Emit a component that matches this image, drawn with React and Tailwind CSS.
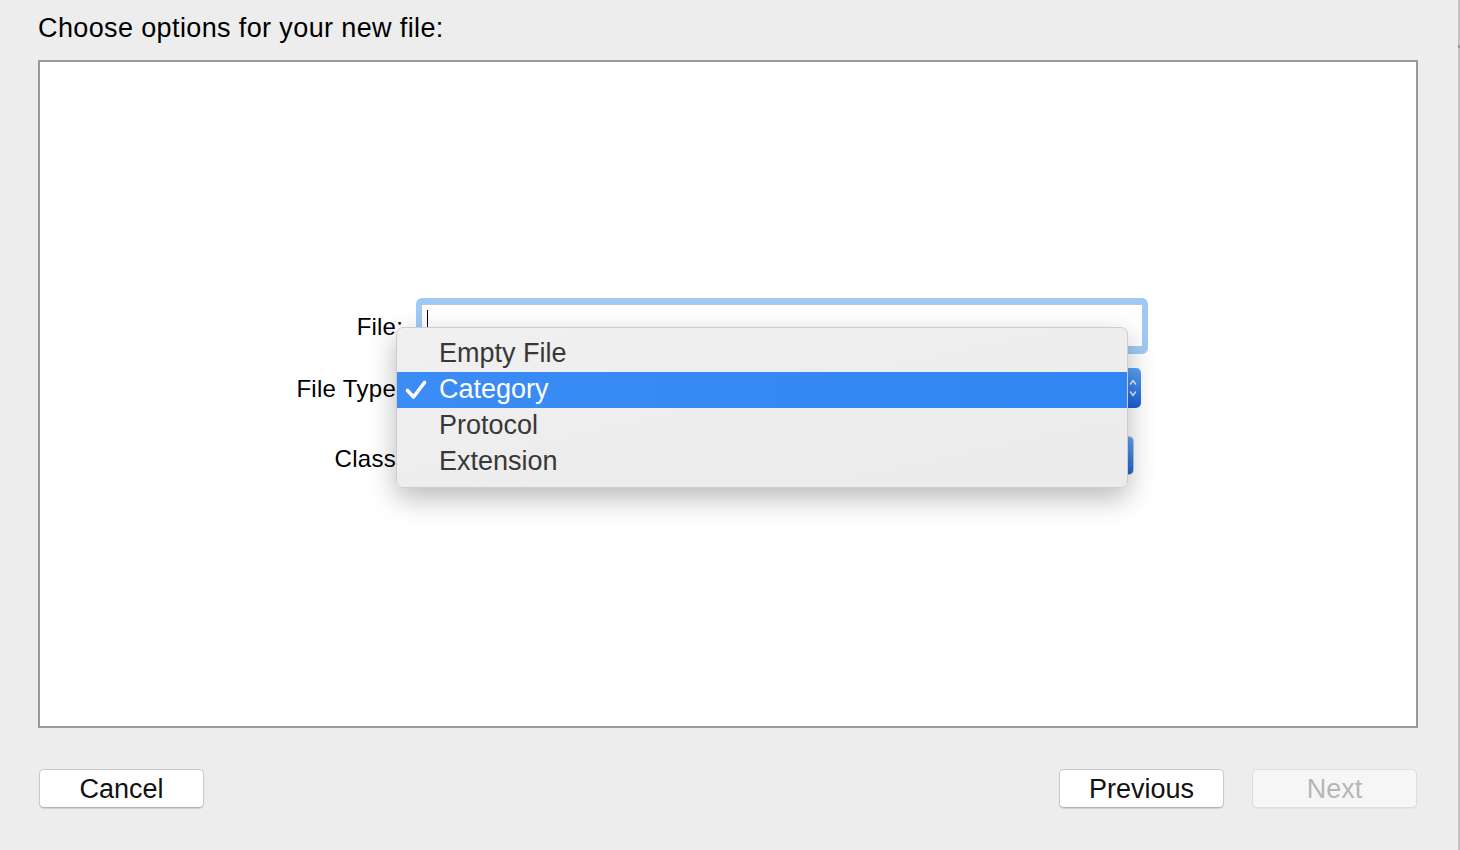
import React from 'react';

const font = "font-['Liberation_Sans',Arial,sans-serif]";

const MenuItem = ({ label, selected }) => (
    <div
        className={`flex items-start h-[36px] leading-[34px] text-[27px] ${
            selected ? 'bg-gradient-to-r from-[#3b8cf5] to-[#3186f3] text-white' : 'text-[#383838]'
        }`}
    >
        <div className="w-[42px] h-full flex items-center pl-[8px]">
            {selected && (
                <svg width="22" height="20" viewBox="0 0 22 20">
                    <path d="M2.5 10.5 L8.5 17 L19.5 2.5" fill="none" stroke="white" strokeWidth="3.6" strokeLinecap="round" strokeLinejoin="round" />
                </svg>
            )}
        </div>
        <span>{label}</span>
    </div>
);

const Button = ({ children, disabled }) => (
    <button
        className={`w-[165px] h-[39px] rounded-[5px] border text-[27px] leading-[38px] text-center ${
            disabled
                ? 'bg-[#f6f6f6] border-[#dedede] text-[#b6b6b6] shadow-[0_1px_0_rgba(0,0,0,0.04)]'
                : 'bg-white border-[#c9c9c9] border-b-[#b3b3b3] text-[#111] shadow-[0_1px_1px_rgba(0,0,0,0.12)]'
        }`}
    >
        {children}
    </button>
);

export default function App() {
    return (
        <div className={`w-[1460px] h-[850px] bg-[#ededed] flex ${font}`}>
            <div className="w-[1458px] flex flex-col pl-[38px] pr-[40px]">
                <h1 className="pt-[12px] text-[27px] leading-[32px] tracking-[0.38px] text-black">Choose options for your new file:</h1>

                <div className="mt-[16px] h-[668px] border-2 border-[#9a9a9a] bg-white">
                    <div className="relative mt-[236px]">
                        {/* File row */}
                        <div className="flex h-[56px]">
                            <div className="w-[363px] text-right text-[24px] leading-[28px] pt-[15px] tracking-[0.2px] text-black">File:</div>
                            <div className="ml-[13px] w-[732px] h-[56px] rounded-[6px] bg-[#9fcaf7] p-[6px] pb-[8px]">
                                <div className="h-full bg-white border-t border-[#c5c5c5] flex items-start pl-[5px] pt-[5px]">
                                    <div className="w-[1px] h-[21px] bg-black" />
                                </div>
                            </div>
                        </div>

                        {/* File Type row */}
                        <div className="flex h-[40px] mt-[14px]">
                            <div className="w-[363px] text-right text-[24px] leading-[28px] pt-[7px] tracking-[0.3px] text-black">File Type:</div>
                            <div className="ml-[20px] w-[718px] h-[40px] rounded-[5px] bg-gradient-to-b from-[#5aa3f8] to-[#1860d6] flex items-center justify-end pr-[4px]">
                                <svg width="8" height="22" viewBox="0 0 8 22">
                                    <path d="M1.5 7 L4 3.5 L6.5 7 M1.5 15 L4 18.5 L6.5 15" fill="none" stroke="#dfe9f7" strokeWidth="1.6" strokeLinecap="round" strokeLinejoin="round" />
                                </svg>
                            </div>
                        </div>

                        {/* Class row */}
                        <div className="flex h-[39px] mt-[28px]">
                            <div className="w-[363px] text-right text-[24px] leading-[28px] pt-[9px] tracking-[0.3px] text-black">Class:</div>
                            <div className="ml-[20px] w-[711px] h-[39px] rounded-[5px] bg-white border border-[#c8c8c8] flex justify-end overflow-hidden">
                                <div className="w-[24px] h-full bg-gradient-to-b from-[#5ea4f6] to-[#1c66db]" />
                            </div>
                        </div>

                        {/* Popup menu */}
                        <div className="absolute left-[356px] top-[29px] w-[732px] h-[161px] rounded-[7px] bg-gradient-to-br from-[#f0f0f0] to-[#ebebeb] border border-[#cdcdcd] pt-[8px] shadow-[0_10px_28px_rgba(0,0,0,0.28)]">
                            <MenuItem label="Empty File" />
                            <MenuItem label="Category" selected />
                            <MenuItem label="Protocol" />
                            <MenuItem label="Extension" />
                        </div>
                    </div>
                </div>

                <div className="mt-[41px] flex items-center justify-between">
                    <div className="pl-[1px]">
                        <Button>Cancel</Button>
                    </div>
                    <div className="flex gap-[28px] pr-[1px]">
                        <Button>Previous</Button>
                        <Button disabled>Next</Button>
                    </div>
                </div>
            </div>
            <div className="w-[2px] h-full bg-[#c3c3c3] flex flex-col">
                <div className="mt-[45px] h-[3px] bg-[#999]" />
            </div>
        </div>
    );
}
